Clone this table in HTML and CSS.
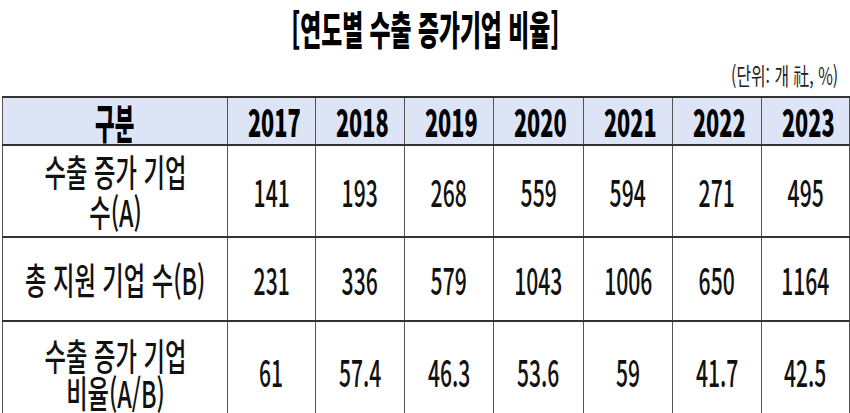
FILE: index.html
```html
<!DOCTYPE html>
<html lang="ko">
<head>
<meta charset="utf-8">
<link rel="stylesheet" href="styles.css">
</head>
<body>
<div class="page">
  <h1 class="title"><span class="sq">[연도별 수출 증가기업 비율]</span></h1>
  <div class="unit"><span class="sq sq-unit">(단위: 개 社, %)</span></div>
  <table class="grid">
    <colgroup>
      <col class="c-label"><col class="c-y1"><col class="c-y"><col class="c-y"><col class="c-y2"><col class="c-y"><col class="c-y"><col class="c-y1">
    </colgroup>
    <thead>
      <tr class="head">
        <th class="hlabel"><span class="sq sq-narrow">구분</span></th>
        <th><span class="sq">2017</span></th>
        <th><span class="sq">2018</span></th>
        <th><span class="sq">2019</span></th>
        <th><span class="sq">2020</span></th>
        <th><span class="sq">2021</span></th>
        <th><span class="sq">2022</span></th>
        <th><span class="sq">2023</span></th>
      </tr>
    </thead>
    <tbody>
      <tr class="r1">
        <td class="label"><div class="fit"><span class="sq sq-label">수출 증가 기업<br>수(A)</span></div></td>
        <td><span class="sq">141</span></td>
        <td><span class="sq">193</span></td>
        <td><span class="sq">268</span></td>
        <td><span class="sq">559</span></td>
        <td><span class="sq">594</span></td>
        <td><span class="sq">271</span></td>
        <td><span class="sq">495</span></td>
      </tr>
      <tr class="r2">
        <td class="label"><div class="fit"><span class="sq sq-label">총 지원 기업 수(B)</span></div></td>
        <td><span class="sq">231</span></td>
        <td><span class="sq">336</span></td>
        <td><span class="sq">579</span></td>
        <td><span class="sq">1043</span></td>
        <td><span class="sq">1006</span></td>
        <td><span class="sq">650</span></td>
        <td><span class="sq">1164</span></td>
      </tr>
      <tr class="r3">
        <td class="label"><div class="fit"><span class="sq sq-label">수출 증가 기업<br>비율(A/B)</span></div></td>
        <td><span class="sq">61</span></td>
        <td><span class="sq">57.4</span></td>
        <td><span class="sq">46.3</span></td>
        <td><span class="sq">53.6</span></td>
        <td><span class="sq">59</span></td>
        <td><span class="sq">41.7</span></td>
        <td><span class="sq">42.5</span></td>
      </tr>
    </tbody>
  </table>
</div>
</body>
</html>
```

FILE: styles.css
```css
html, body {
  margin: 0;
  padding: 0;
  background: #ffffff;
}

body {
  font-family: "Noto Sans CJK KR", "Noto Sans", sans-serif;
  color: #111111;
  overflow: hidden;
}

.page {
  width: 850px;
  height: 413px;
  overflow: hidden;
}

.sq {
  display: inline-block;
  transform: scaleX(0.57);
  transform-origin: center;
  white-space: nowrap;
}

.title {
  margin: 0;
  height: 58px;
  text-align: center;
  font-size: 40px;
  line-height: 56px;
  font-weight: 900;
  color: #000;
}

.unit {
  height: 38px;
  padding-right: 12px;
  text-align: right;
  font-size: 24px;
  line-height: 34px;
  padding-top: 0;
  box-sizing: border-box;
  color: #222;
}

.sq-unit {
  transform: scaleX(0.66);
  transform-origin: right center;
}

.grid {
  margin-left: 2px;
  width: 847px;
  table-layout: fixed;
  border-collapse: collapse;
}

.c-label { width: 225px; }
.c-y1 { width: 88px; }
.c-y { width: 89px; }
.c-y2 { width: 90px; }

.grid th,
.grid td {
  padding: 0;
  text-align: center;
  vertical-align: middle;
  border-left: 1px solid #555;
  border-right: 1px solid #555;
}

.head th {
  background: #dde4f6;
  height: 46px;
  font-size: 38px;
  font-weight: 900;
  line-height: 44px;
  border-top: 2px solid #333;
  border-bottom: 2px solid #333;
  color: #000;
}

.hlabel {
  font-size: 41px !important;
}

.sq-narrow {
  transform: scaleX(0.52);
}

.grid td {
  font-size: 37px;
  font-weight: 500;
  line-height: 40px;
  border-bottom: 2px solid #333;
}

.fit {
  display: flex;
  justify-content: center;
}

.sq-label {
  transform: scaleX(0.63);
}

.r1 td { height: 90px; }
.r2 td { height: 82px; }
.r3 td { height: 92px; border-bottom: none; }
.r3 .label { line-height: 37px; padding-top: 6px; }
```
